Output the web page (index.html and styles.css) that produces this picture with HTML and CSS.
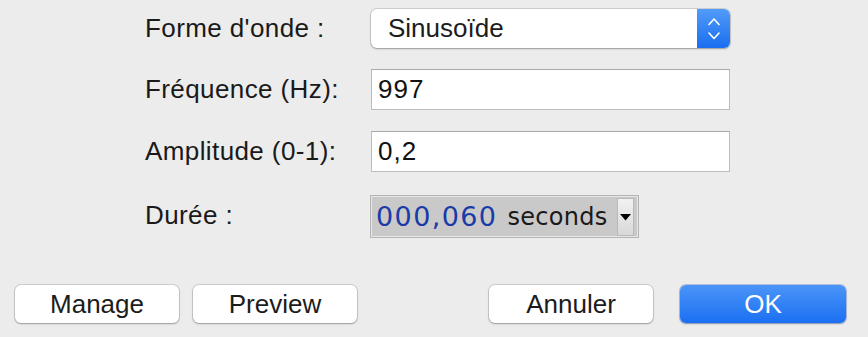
FILE: index.html
```html
<!DOCTYPE html>
<html lang="fr">
<head>
  <meta charset="UTF-8">
  <meta name="viewport" content="width=device-width, initial-scale=1.0">
  <title>Tone</title>
  <link rel="stylesheet" href="styles.css">
</head>
<body>
  <div class="dialog">
    <div class="fields">
      <label class="label" for="forme">Forme d'onde :</label>
      <div class="select-box" id="forme">
        <span class="select-text">Sinusoïde</span>
        <span class="select-arrows">
          <svg width="14" height="26" viewBox="0 0 14 26">
            <path d="M2 8.5 L7 3 L12 8.5 M2 17 L7 22.5 L12 17" fill="none" stroke="#fff" stroke-width="1.6" stroke-linecap="round" stroke-linejoin="round"/>
          </svg>
        </span>
      </div>

      <label class="label" for="freq">Fréquence (Hz):</label>
      <input class="text-field" id="freq" type="text" value="997">

      <label class="label" for="amp">Amplitude (0-1):</label>
      <input class="text-field" id="amp" type="text" value="0,2">

      <span class="label">Durée :</span>
      <div class="duration">
        <span class="duration-value">000,060</span>
        <span class="duration-unit">seconds</span>
        <span class="duration-drop">
          <svg width="11" height="8" viewBox="0 0 11 8">
            <path d="M0 1 L11 1 L5.5 7.5 Z" fill="#000"/>
          </svg>
        </span>
      </div>
    </div>

    <div class="buttons">
      <button class="btn">Manage</button>
      <button class="btn">Preview</button>
      <button class="btn btn-push">Annuler</button>
      <button class="btn btn-ok">OK</button>
    </div>
  </div>
</body>
</html>
```

FILE: styles.css
```css
* {
  box-sizing: border-box;
}

body {
  margin: 0;
  background: #ececec;
  font-family: "Liberation Sans", Arial, sans-serif;
  color: #1c1c1c;
}

.dialog {
  width: 868px;
  height: 337px;
}

.fields {
  display: grid;
  grid-template-columns: 226px 359px;
  align-items: center;
  row-gap: 21px;
  padding: 9px 0 0 145px;
}

.label {
  font-size: 26px;
  letter-spacing: 0.4px;
  color: #1a1a1a;
}

.select-box {
  display: flex;
  align-items: stretch;
  height: 39px;
  background: #fff;
  border-radius: 6px;
  box-shadow: 0 0 0 1px rgba(0, 0, 0, .12), 0 1px 2px rgba(0, 0, 0, .25);
  overflow: hidden;
}

.select-text {
  flex: 1;
  display: flex;
  align-items: center;
  padding-left: 17px;
  font-size: 26px;
  color: #1c1c1c;
}

.select-arrows {
  width: 33px;
  display: flex;
  align-items: center;
  justify-content: center;
  background: linear-gradient(#529bf8, #1a6ef0);
}

.text-field {
  height: 41px;
  width: 359px;
  margin: 0;
  padding: 0 6px;
  font-family: "Liberation Sans", Arial, sans-serif;
  font-size: 26px;
  letter-spacing: 1px;
  color: #111;
  background: #fff;
  border: 1px solid #bdbdbd;
  border-top-color: #a9a9a9;
  outline: none;
}

.duration {
  display: flex;
  align-items: center;
  width: 267px;
  height: 41px;
  margin-top: 3px;
  padding: 0 3px 0 4px;
  background: #c9c9c9;
  border: 1px solid #e6e6e6;
  box-shadow: 0 0 0 1px #b4b4b4;
}

.duration-value {
  font-family: "DejaVu Sans", Verdana, sans-serif;
  font-size: 27px;
  letter-spacing: 1.4px;
  color: #1a3aa8;
}

.duration-unit {
  margin-left: 10px;
  font-family: "DejaVu Sans", Verdana, sans-serif;
  font-size: 24px;
  letter-spacing: 0.3px;
  color: #1a1a1a;
}

.duration-drop {
  margin-left: auto;
  width: 17px;
  height: 38px;
  display: flex;
  align-items: center;
  justify-content: center;
  background: linear-gradient(#f2f2f2, #d8d8d8);
  border: 1px solid #b9b9b9;
}

.buttons {
  display: flex;
  gap: 14px;
  padding: 0 22px 0 15px;
  margin-top: 48px;
}

.btn {
  width: 164px;
  height: 38px;
  font-family: "Liberation Sans", Arial, sans-serif;
  font-size: 26px;
  color: #1c1c1c;
  background: #fff;
  border: none;
  border-radius: 6px;
  box-shadow: 0 0 0 1px rgba(0, 0, 0, .12), 0 1px 2px rgba(0, 0, 0, .25);
}

.btn-push {
  margin-left: auto;
  margin-right: 13px;
}

.btn-ok {
  width: 166px;
  color: #fff;
  background: linear-gradient(#4b95f8, #1b6ff2);
  box-shadow: 0 0 0 1px rgba(0, 60, 180, .25), 0 1px 2px rgba(0, 0, 0, .25);
}
```
